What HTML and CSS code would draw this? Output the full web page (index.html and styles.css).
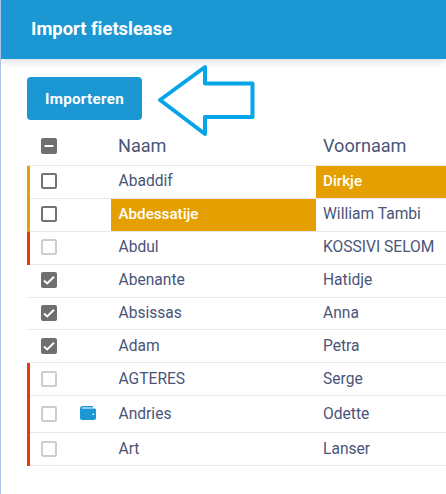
FILE: index.html
```html
<!DOCTYPE html>
<html lang="nl">
<head>
<meta charset="utf-8">
<title>Import fietslease</title>
<link rel="stylesheet" href="styles.css">
</head>
<body>
<div class="page">
  <header class="topbar"><h1>Import fietslease</h1></header>
  <div class="actions">
    <button class="btn" type="button">Importeren</button>
    <svg class="arrow" width="104" height="76" viewBox="0 0 104 76"><path d="M5 36 L50 3 V19.5 H97.5 V53 H50 V70 Z" fill="#fff" stroke="#05a5e8" stroke-width="4" stroke-linejoin="round"/></svg>
  </div>
  <div class="table">
    <div class="row head">
      <span class="mark"></span>
      <span class="check cell-check on"><svg viewBox="0 0 16 16" width="16" height="16"><path d="M3.5 8h9" stroke="#fff" stroke-width="2"/></svg></span>
      <span class="icon"></span>
      <span class="cell">Naam</span>
      <span class="cell">Voornaam</span>
    </div>
    <div class="row"><span class="mark amber"></span><span class="check"></span><span class="icon"></span><span class="cell">Abaddif</span><span class="cell last hl">Dirkje</span></div>
    <div class="row"><span class="mark amber"></span><span class="check"></span><span class="icon"></span><span class="cell hl">Abdessatije</span><span class="cell last">William Tambi</span></div>
    <div class="row"><span class="mark red"></span><span class="check off"></span><span class="icon"></span><span class="cell">Abdul</span><span class="cell last">KOSSIVI SELOM</span></div>
    <div class="row"><span class="mark"></span><span class="check on"><svg viewBox="0 0 16 16" width="16" height="16"><path d="M3 8.5l3.2 3L13 4.8" fill="none" stroke="#fff" stroke-width="1.9"/></svg></span><span class="icon"></span><span class="cell">Abenante</span><span class="cell last">Hatidje</span></div>
    <div class="row"><span class="mark"></span><span class="check on"><svg viewBox="0 0 16 16" width="16" height="16"><path d="M3 8.5l3.2 3L13 4.8" fill="none" stroke="#fff" stroke-width="1.9"/></svg></span><span class="icon"></span><span class="cell">Absissas</span><span class="cell last">Anna</span></div>
    <div class="row"><span class="mark"></span><span class="check on"><svg viewBox="0 0 16 16" width="16" height="16"><path d="M3 8.5l3.2 3L13 4.8" fill="none" stroke="#fff" stroke-width="1.9"/></svg></span><span class="icon"></span><span class="cell">Adam</span><span class="cell last">Petra</span></div>
    <div class="row"><span class="mark red"></span><span class="check off"></span><span class="icon"></span><span class="cell">AGTERES</span><span class="cell last">Serge</span></div>
    <div class="row tall"><span class="mark red"></span><span class="check off"></span><span class="icon"><svg viewBox="0 0 16 14" width="16" height="14"><path d="M2.5 0H13v1.6H2.2C1.9 1.6 1.9 2.6 2.2 2.6H14.5c.8 0 1.5.7 1.5 1.5V12c0 1.1-.9 2-2 2H2c-1.1 0-2-.9-2-2V2.5C0 1.1 1.1 0 2.5 0zM12.6 7.6v1.5h1.5V7.6z" fill="#1b98d3" fill-rule="evenodd"/></svg></span><span class="cell">Andries</span><span class="cell last">Odette</span></div>
    <div class="row"><span class="mark red"></span><span class="check off"></span><span class="icon"></span><span class="cell">Art</span><span class="cell last">Lanser</span></div>
  </div>
</div>
</body>
</html>
```
FILE: styles.css
```css
html, body { margin: 0; padding: 0; background: #fff; }
body {
  width: 446px;
  height: 494px;
  overflow: hidden;
  font-family: Roboto, "Liberation Sans", sans-serif;
  font-variant-ligatures: none;
  color: #4a5578;
  border-left: 1px solid #a9c4e6;
  box-sizing: border-box;
}
.page { display: flex; flex-direction: column; }
.topbar {
  height: 59px;
  background: #1b98d3;
  box-shadow: 0 2px 8px rgba(0, 0, 0, 0.16);
  display: flex;
  align-items: center;
  padding-left: 30px;
  flex: none;
}
.topbar h1 {
  margin: 0 0 3px;
  font-size: 18.4px;
  font-weight: 700;
  color: #fff;
}
.actions {
  position: relative;
  padding: 18px 0 0 26px;
  height: 51px;
  flex: none;
}
.btn {
  display: block;
  width: 115px;
  height: 43px;
  border: 0;
  border-radius: 4px;
  background: #1b98d3;
  color: #fff;
  font: 700 15.2px Roboto, "Liberation Sans", sans-serif;
  letter-spacing: 0.3px;
  padding: 0;
}
.arrow { position: absolute; left: 154px; top: 5px; }
.table { margin-left: 26px; display: flex; flex-direction: column; }
.row {
  display: grid;
  grid-template-columns: 3px 50px 31px 205px 1fr;
  height: 32.9px;
  box-sizing: border-box;
  border-bottom: 1px solid #e8e8e8;
  align-items: stretch;
  font-size: 15.6px;
  width: 419px;
}
.row.head { height: 38px; font-size: 18.1px; }
.row.tall { height: 37px; }
.mark { margin-bottom: -1px; }
.mark.amber { background: #e59f00; }
.mark.red { background: #e53a0a; }
.row.head .mark { background: none; }
.check {
  width: 16px;
  height: 16px;
  box-sizing: border-box;
  border: 2px solid #737373;
  border-radius: 2px;
  align-self: center;
  margin: 0 0 1px 11px;
  position: relative;
}
.check.off { border-color: #cdcdcd; }
.check.on { background: #6f6f6f; border-color: #6f6f6f; }
.check svg { position: absolute; left: -2px; top: -2px; }
.icon { display: flex; align-items: center; justify-content: flex-start; padding-bottom: 2px; }
.cell {
  display: flex;
  align-items: center;
  padding: 0 0 1.2px 7.5px;
  white-space: nowrap;
}
.cell.last { padding-left: 7px; }
.row.head .cell { padding: 0 0 2px 7px; }
.cell.hl { background: #e59f00; color: #fff; font-weight: 500; font-size: 15.2px; }
```
